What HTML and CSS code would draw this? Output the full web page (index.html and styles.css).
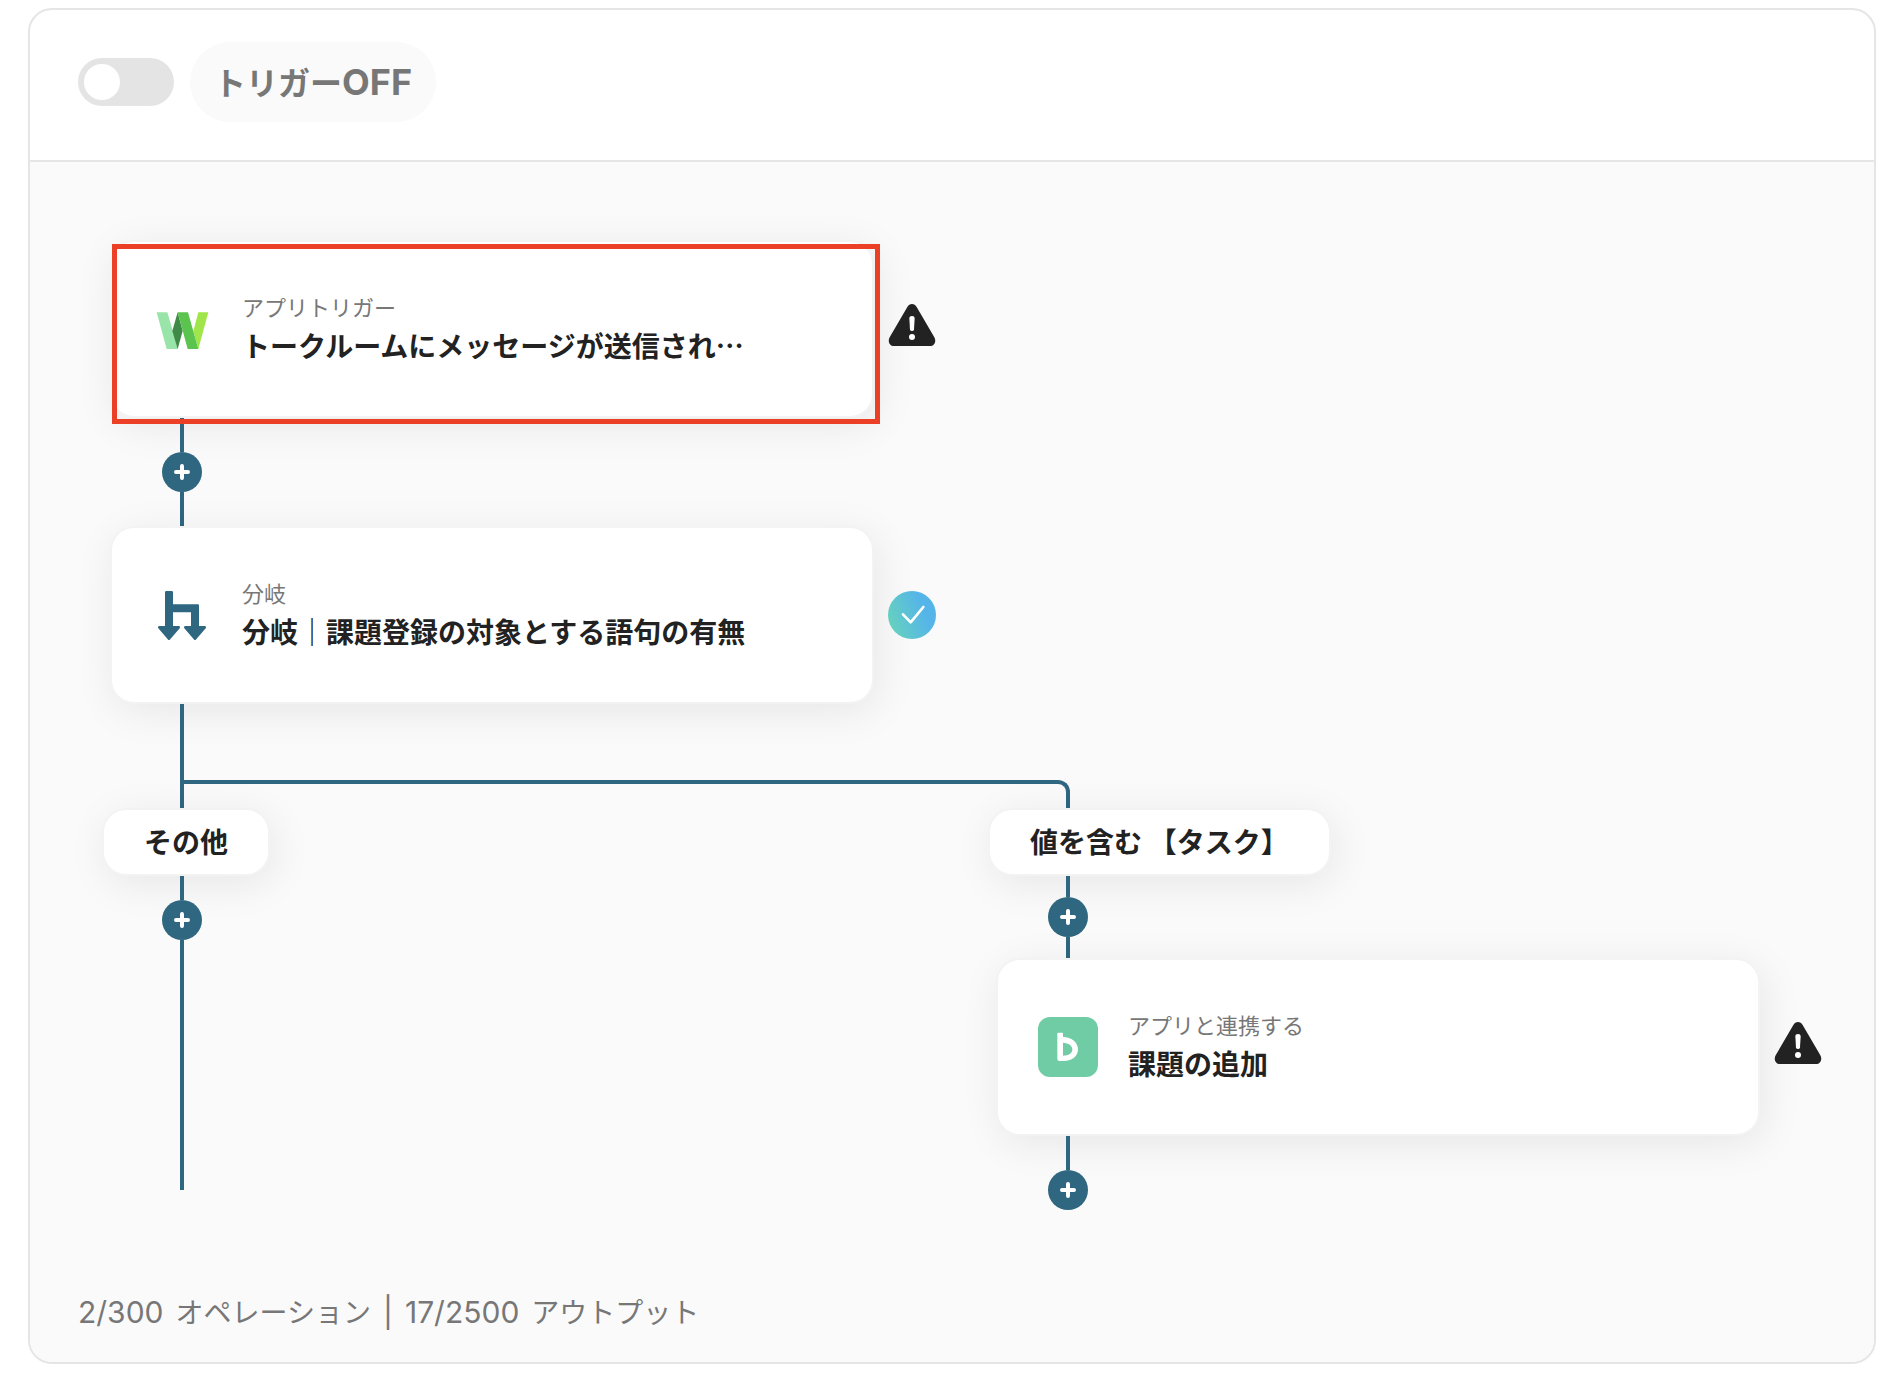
FILE: index.html
```html
<!DOCTYPE html>
<html lang="ja">
<head>
<meta charset="utf-8">
<meta name="viewport" content="width=device-width, initial-scale=1">
<title>トリガー設定</title>
<link rel="stylesheet" href="styles.css">
</head>
<body>
<svg class="symbols" aria-hidden="true">
  <symbol id="warning" viewBox="0 0 144 144">
    <path fill="#222" d="M58 18C64 6 80 6 86 18L139 109C146 121 139 135 126 135H18C5 135-2 121 5 109Z"/>
    <path fill="#fff" d="M64 51Q64 45 72 45Q80 45 80 51L78 86Q77 90 72 90Q67 90 66 86Z"/>
    <circle cx="72" cy="108" r="9" fill="#fff"/>
  </symbol>
  <symbol id="plus" viewBox="0 0 16 16">
    <path d="M8 2V14M2 8H14" fill="none" stroke="#fff" stroke-width="4" stroke-linecap="round"/>
  </symbol>
</svg>
<main class="panel">
  <header class="panel-header">
    <input class="toggle" type="checkbox" role="switch" id="trigger">
    <label class="toggle-label" for="trigger">トリガー<span class="toggle-state">OFF</span></label>
  </header>
  <section class="canvas">
    <div class="flow">
      <div class="trunk">
        <div class="node">
          <article class="card highlighted">
            <svg class="card-icon" viewBox="0 0 180 180" aria-hidden="true">
              <path fill="#98e4a9" d="M14 40H46L78 150H44Z"/>
              <path fill="#3f8a46" d="M77 40L92 96L77 150L61 96Z"/>
              <path fill="#a0e64a" d="M139 40H169L139 150L124 96Z"/>
              <path fill="#5bc44f" d="M77 40H108L139 150H107Z"/>
            </svg>
            <div class="card-text">
              <p class="card-kind">アプリトリガー</p>
              <h2 class="card-title">トークルームにメッセージが送信され…</h2>
            </div>
          </article>
          <svg class="status warning" role="img" aria-label="警告"><use href="#warning"/></svg>
        </div>
        <div class="connector">
          <button class="add" type="button" aria-label="追加"><svg><use href="#plus"/></svg></button>
        </div>
        <div class="node">
          <article class="card">
            <svg class="card-icon" viewBox="0 0 180 180" aria-hidden="true">
              <g fill="#2f6780" stroke="#2f6780" stroke-linejoin="round">
                <path stroke-width="8" d="M43 22H59V127H43ZM22 127H80L51 161ZM100 127H158L129 161Z"/>
                <path stroke-width="6" d="M60 61H138V125H120V79H60Z"/>
              </g>
            </svg>
            <div class="card-text">
              <p class="card-kind">分岐</p>
              <h2 class="card-title">分岐｜課題登録の対象とする語句の有無</h2>
            </div>
          </article>
          <svg class="status" viewBox="0 0 144 144" role="img" aria-label="設定済み">
            <defs><linearGradient id="done" x1="0" y1=".7" x2="1" y2=".3"><stop offset="0" stop-color="#67d2bd"/><stop offset=".75" stop-color="#55b5e8"/></linearGradient></defs>
            <circle cx="72" cy="72" r="72" fill="url(#done)"/>
            <path d="M45 70L68 94L106 48" fill="none" stroke="#fff" stroke-width="8" stroke-linecap="round" stroke-linejoin="round"/>
          </svg>
        </div>
        <div class="stem"></div>
      </div>
      <div class="fork"></div>
      <div class="branch">
        <h3 class="branch-label">その他</h3>
        <div class="connector open-end">
          <button class="add" type="button" aria-label="追加"><svg><use href="#plus"/></svg></button>
        </div>
      </div>
      <div class="branch">
        <h3 class="branch-label">値を含む 【タスク】</h3>
        <div class="connector short">
          <button class="add" type="button" aria-label="追加"><svg><use href="#plus"/></svg></button>
        </div>
        <div class="node">
          <article class="card">
            <svg class="card-icon" viewBox="0 0 180 180" aria-hidden="true">
              <rect width="180" height="180" rx="36" fill="#70cca5"/>
              <path fill="#fff" fill-rule="evenodd" d="M58 49Q58 47 60 47H73Q75 47 75 49V60C100 60 120 76 120 97C120 120 100 132 77 132H64Q58 132 58 126ZM75 77V116C92 116 103 109 103 97C103 86 92 78 75 77Z"/>
            </svg>
            <div class="card-text">
              <p class="card-kind">アプリと連携する</p>
              <h2 class="card-title">課題の追加</h2>
            </div>
          </article>
          <svg class="status warning" role="img" aria-label="警告"><use href="#warning"/></svg>
        </div>
        <div class="connector last">
          <button class="add" type="button" aria-label="追加"><svg><use href="#plus"/></svg></button>
        </div>
      </div>
    </div>
    <p class="usage">
      <span class="count">2/300</span>
      <span>オペレーション</span>
      <span class="count">|</span>
      <span class="count">17/2500</span>
      <span>アウトプット</span>
    </p>
  </section>
</main>
</body>
</html>
```
FILE: styles.css
```css
:root {
  --line: #2f6780;
  --border: #e5e5e5;
  --surface: #fafafa;
  --ink: #222;
  --muted: #777;
  --shadow: 4px 8px 40px rgba(0, 0, 0, .08);
}

* { box-sizing: border-box; }

body {
  margin: 0;
  padding: 8px 28px 22px;
  background: #fff;
  color: var(--ink);
  font-family: "Noto Sans CJK JP", sans-serif;
}

h2, h3, p { margin: 0; }

.symbols { display: none; }

.panel {
  border: 2px solid var(--border);
  border-radius: 24px;
  overflow: hidden;
}

.panel-header {
  display: flex;
  align-items: center;
  gap: 16px;
  padding: 32px 48px 38px;
  border-bottom: 2px solid var(--border);
}

.toggle {
  appearance: none;
  width: 96px;
  height: 48px;
  margin: 0;
  padding: 6px;
  border-radius: 24px;
  background: #e4e4e4;
}

.toggle::before {
  content: "";
  display: block;
  width: 36px;
  height: 36px;
  border-radius: 50%;
  background: #fff;
}

.toggle:checked { background: var(--line); }
.toggle:checked::before { margin-left: auto; }

.toggle-label {
  height: 80px;
  padding: 0 24px;
  border-radius: 40px;
  background: var(--surface);
  color: var(--muted);
  font: bold 32px/80px Inter, "Noto Sans CJK JP", sans-serif;
}

.toggle-state { font-size: 36px; }

.canvas {
  padding: 78px 0 30px;
  background: var(--surface);
}

.flow {
  display: grid;
  grid-template-columns: repeat(2, minmax(0, 1fr));
  column-gap: 60px;
  padding: 0 52px 0 80px;
}

.trunk { grid-column: 1; }

.node {
  display: flex;
  align-items: center;
  gap: 14px;
}

.card {
  position: relative;
  flex: 1;
  min-width: 0;
  display: flex;
  align-items: center;
  gap: 30px;
  padding: 46px 40px;
  border: 2px solid #f3f3f3;
  border-radius: 24px;
  background: #fff;
  box-shadow: var(--shadow);
}

.highlighted::after {
  content: "";
  position: absolute;
  inset: 2px -8px -8px 0;
  border: 5px solid #eb4026;
  z-index: 1;
}

.card-icon {
  flex: none;
  width: 60px;
  height: 60px;
}

.card-text {
  min-width: 0;
  padding-bottom: 4px;
}

.card-kind {
  color: var(--muted);
  font-size: 22px;
  line-height: 36px;
}

.card-title {
  font-size: 28px;
  line-height: 42px;
  white-space: nowrap;
  overflow: hidden;
  text-overflow: ellipsis;
}

.status {
  position: relative;
  flex: none;
  width: 48px;
  height: 48px;
}

.status.warning { margin-bottom: 8px; }

.connector {
  position: relative;
  display: flex;
  flex-direction: column;
  align-items: center;
  width: 40px;
  height: 108px;
  margin-left: 52px;
}

.connector::before,
.connector::after {
  content: "";
  flex: 1;
  width: 4px;
  background: var(--line);
}

.add {
  display: grid;
  place-items: center;
  width: 40px;
  height: 40px;
  padding: 0;
  border: 0;
  border-radius: 50%;
  background: var(--line);
}

.add svg {
  width: 16px;
  height: 16px;
}

.connector.short { height: 82px; }
.connector.last { height: 74px; }
.connector.last::after { display: none; }

.connector.open-end {
  flex: 1;
  margin-bottom: 20px;
}

.connector.open-end::before { flex: 0 0 24px; }

.stem {
  position: relative;
  width: 4px;
  height: 76px;
  margin-left: 70px;
  background: var(--line);
}

.fork {
  grid-column: 1 / -1;
  width: calc(50% + 34px);
  height: 28px;
  margin-left: 70px;
  border: solid var(--line);
  border-width: 4px 4px 0;
  border-top-right-radius: 12px;
}

.branch {
  display: flex;
  flex-direction: column;
}

.branch-label {
  align-self: flex-start;
  height: 68px;
  margin-left: -8px;
  padding: 0 40px;
  border: 2px solid #f3f3f3;
  border-radius: 24px;
  background: #fff;
  box-shadow: var(--shadow);
  font: bold 28px/66px Inter, "Noto Sans CJK JP", sans-serif;
}

.usage {
  display: flex;
  align-items: baseline;
  gap: 12px;
  height: 42px;
  margin-top: 80px;
  padding: 0 48px;
  color: var(--muted);
  font-size: 28px;
  line-height: 42px;
}

.count {
  font-family: Inter, sans-serif;
  font-size: 30px;
}
```
